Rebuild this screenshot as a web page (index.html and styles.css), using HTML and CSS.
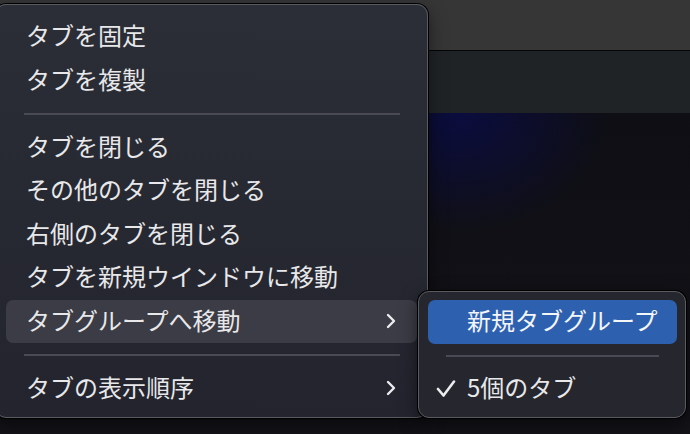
FILE: index.html
```html
<!DOCTYPE html>
<html lang="ja">
    <head>
        <title>タブメニュー</title>
        <link rel="stylesheet" href="styles.css">
    </head>
    <body>
        <div class="window">
            <div class="tabbar"></div>
            <div class="toolbar"></div>
            <div class="content"></div>

            <div class="menu main-menu">
                <div class="item">タブを固定</div>
                <div class="item">タブを複製</div>
                <div class="sep"></div>
                <div class="item">タブを閉じる</div>
                <div class="item">その他のタブを閉じる</div>
                <div class="item">右側のタブを閉じる</div>
                <div class="item">タブを新規ウインドウに移動</div>
                <div class="item open">
                    <span>タブグループへ移動</span>
                    <svg class="chevron" width="12" height="16" viewBox="0 0 12 16"><polyline points="3,2 9,8 3,14" /></svg>
                </div>
                <div class="sep"></div>
                <div class="item">
                    <span>タブの表示順序</span>
                    <svg class="chevron" width="12" height="16" viewBox="0 0 12 16"><polyline points="3,2 9,8 3,14" /></svg>
                </div>
            </div>

            <div class="menu sub-menu">
                <div class="item selected">新規タブグループ</div>
                <div class="sep"></div>
                <div class="item">
                    <svg class="check" width="20" height="18" viewBox="0 0 20 18"><polyline points="2,9 7.5,15.5 18,1.5" /></svg>
                    <span>5個のタブ</span>
                </div>
            </div>
        </div>
    </body>
</html>
```

FILE: styles.css
```css
body{
    margin: 0;
    background-color: #111116;
    font-family: "Noto Sans CJK JP", "Noto Sans", sans-serif;
}
.window{
    position: relative;
    width: 690px;
    height: 434px;
    overflow: hidden;
    display: flex;
    flex-direction: column;
}
.tabbar{
    height: 50px;
    background-color: #363636;
    border-bottom: 1px solid #050505;
}
.toolbar{
    height: 62px;
    background-color: #202326;
}
.content{
    flex: 1;
    background:
        radial-gradient(ellipse 150px 120px at 460px 0px, rgba(10, 12, 70, 0.85), rgba(10, 12, 70, 0) 100%),
        linear-gradient(#0e0e14, #131318);
}

.menu{
    position: absolute;
    box-sizing: border-box;
    border: 1px solid #5a5b61;
    border-radius: 11px;
    box-shadow: 0 0 0 1px #000, 0 6px 18px rgba(0, 0, 0, 0.5);
    background: linear-gradient(#2b2e36, #23242e);
    color: #e8e8ea;
    font-size: 24px;
}
.main-menu{
    left: -5px;
    top: 4px;
    width: 433px;
    height: 414px;
    padding: 10px 10px 0 10px;
}
.sub-menu{
    left: 418px;
    top: 291px;
    width: 268px;
    height: 127px;
    padding: 8px 8px 0 9px;
    background: #25262e;
}

.item{
    height: 43.5px;
    display: flex;
    align-items: center;
    justify-content: space-between;
    padding: 0 20px 4px 20px;
    box-sizing: border-box;
    border-radius: 7px;
    white-space: nowrap;
}
.item.open{
    background-color: #3b3c45;
}
.sep{
    height: 2px;
    margin: 11px 17px 10.5px 18px;
    background-color: #494a53;
}

.chevron{
    margin-top: 4px;
}
.chevron polyline{
    fill: none;
    stroke: #ececee;
    stroke-width: 2.4;
    stroke-linecap: round;
    stroke-linejoin: round;
}

.sub-menu .item{
    justify-content: flex-start;
    padding: 0 0 4px 39px;
}
.sub-menu .item.selected{
    background-color: #2e60b0;
    color: #f4f6fa;
}
.sub-menu .sep{
    margin: 11px 18px 10.5px 18px;
}
.sub-menu .item .check{
    margin: 4px 11px 0 -31px;
}
.check polyline{
    fill: none;
    stroke: #ececee;
    stroke-width: 2.6;
    stroke-linecap: round;
    stroke-linejoin: round;
}
```
